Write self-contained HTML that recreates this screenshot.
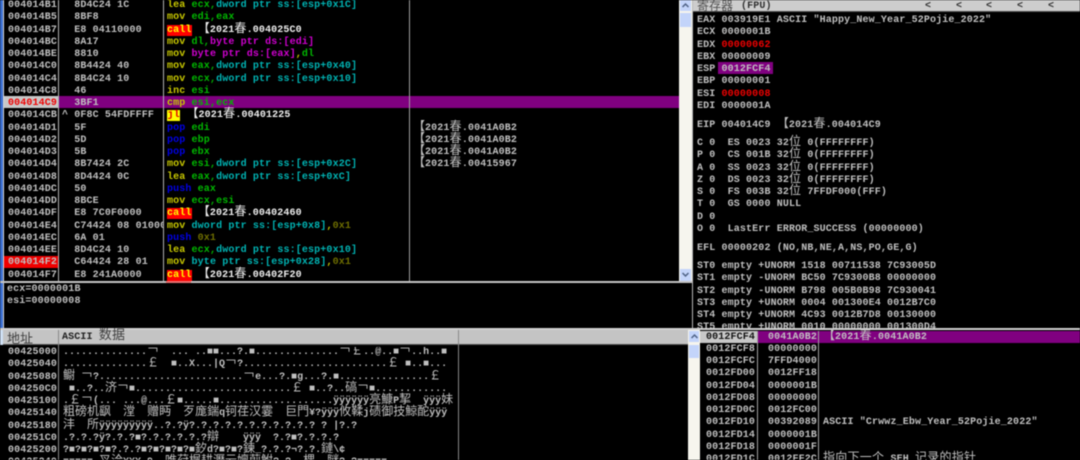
<!DOCTYPE html>
<html lang="zh-CN"><head><meta charset="utf-8"><title>OllyDbg</title>
<style>
html,body{margin:0;padding:0;background:#000;width:1080px;height:460px;overflow:hidden}
#r{position:relative;width:1080px;height:460px;overflow:hidden;background:#000;filter:blur(.4px)}
.a{position:absolute}
.t{position:absolute;white-space:pre;font:bold 10px/12.25px "Liberation Mono","Noto Sans CJK SC",monospace;letter-spacing:.13px;color:#c0c0c0}
.c{font:normal 12px/0 "Noto Sans CJK SC","WenQuanYi Zen Hei",sans-serif;letter-spacing:.26px}
.z{letter-spacing:0}
.b{font:normal 12px/0 "Noto Sans CJK SC",sans-serif;margin-left:-6px;letter-spacing:0}
.m{color:#c8c800}.g{color:#00b800}.y{color:#00b4b4}.p{color:#d000d0}.u{color:#0000e6}.d{color:#6e6e00}.w{color:#f0f0f0}
.call{background:#f00;color:#ff0}.jl{background:#ff0;color:#e00000;padding:0 .5px}
.sb{background:#f6f5ee}.btn{background:#c3d4fa}
.chev{position:absolute;left:3px;width:7px;height:7px}
</style></head><body><div id="r">

<!-- left strip -->
<div class="a" style="left:0;top:0;width:3px;height:330px;background:#3a6ed0"></div>
<div class="a" style="left:3px;top:0;width:1px;height:330px;background:#d8d8d8"></div>

<!-- disasm row highlights -->
<div class="a" style="left:4px;top:96px;width:54px;height:12px;background:#c8c8c8"></div>
<div class="a" style="left:59px;top:96px;width:620px;height:12px;background:#800080"></div>
<div class="a" style="left:4px;top:256px;width:54px;height:12px;background:#f00000"></div>
<!-- separators -->
<div class="a" style="left:58px;top:0;width:1px;height:281px;background:#b0b0b0"></div>
<div class="a" style="left:163px;top:0;width:1px;height:281px;background:#b0b0b0"></div>
<div class="a" style="left:409px;top:0;width:1px;height:281px;background:#a0a0a0"></div>

<div class="t" style="left:8px;top:0px">004014B1
004014B5
004014B7
004014BC
004014BE
004014C0
004014C4
004014C8
<span style="color:#f00000">004014C9</span>
004014CB
004014D1
004014D2
004014D3
004014D4
004014D8
004014DC
004014DD
004014DF
004014E4
004014EC
004014EE
004014F2
004014F7</div>

<div class="t" style="left:62px;top:0px;width:101px;height:281px;overflow:hidden">  8D4C24 1C
  8BF8
  E8 04110000
  8A17
  8810
  8B4424 40
  8B4C24 10
  46
  3BF1
^ 0F8C 54FDFFFF
  5F
  5D
  5B
  8B7424 2C
  8D4424 0C
  50
  8BCE
  E8 7C0F0000
  C74424 08 01000000
  6A 01
  8D4C24 10
  C64424 28 01
  E8 241A0000</div>

<div class="t" style="left:167px;top:0px"><span class="m">lea</span> <span class="g">ecx,</span><span class="y">dword ptr ss:[esp+0x1C]</span>
<span class="m">mov</span> <span class="g">edi,eax</span>
<span class="call">call</span>  <span class="w"><span class="b">【</span>2021<span class="c">春</span>.004025C0</span>
<span class="m">mov</span> <span class="g">dl,</span><span class="p">byte ptr ds:[edi]</span>
<span class="m">mov</span> <span class="p">byte ptr ds:[eax]</span><span class="m">,</span><span class="g">dl</span>
<span class="m">mov</span> <span class="g">eax,</span><span class="y">dword ptr ss:[esp+0x40]</span>
<span class="m">mov</span> <span class="g">ecx,</span><span class="y">dword ptr ss:[esp+0x10]</span>
<span class="m">inc</span> <span class="g">esi</span>
<span class="m">cmp</span> <span class="g">esi,ecx</span>
<span class="jl">jl</span>  <span class="w"><span class="b">【</span>2021<span class="c">春</span>.00401225</span>
<span class="u">pop</span> <span class="g">edi</span>
<span class="u">pop</span> <span class="g">ebp</span>
<span class="u">pop</span> <span class="g">ebx</span>
<span class="m">mov</span> <span class="g">esi,</span><span class="y">dword ptr ss:[esp+0x2C]</span>
<span class="m">lea</span> <span class="g">eax,</span><span class="y">dword ptr ss:[esp+0xC]</span>
<span class="u">push</span> <span class="g">eax</span>
<span class="m">mov</span> <span class="g">ecx,esi</span>
<span class="call">call</span>  <span class="w"><span class="b">【</span>2021<span class="c">春</span>.00402460</span>
<span class="m">mov</span> <span class="y">dword ptr ss:[esp+0x8]</span><span class="m">,</span><span class="d">0x1</span>
<span class="u">push</span> <span class="d">0x1</span>
<span class="m">lea</span> <span class="g">ecx,</span><span class="y">dword ptr ss:[esp+0x10]</span>
<span class="m">mov</span> <span class="y">byte ptr ss:[esp+0x28]</span><span class="m">,</span><span class="d">0x1</span>
<span class="call">call</span>  <span class="w"><span class="b">【</span>2021<span class="c">春</span>.00402F20</span></div>

<div class="t" style="left:419px;top:122.5px"><span class="b">【</span>2021<span class="c">春</span>.0041A0B2
<span class="b">【</span>2021<span class="c">春</span>.0041A0B2
<span class="b">【</span>2021<span class="c">春</span>.0041A0B2
<span class="b">【</span>2021<span class="c">春</span>.00415967</div>

<!-- disasm scrollbar -->
<div class="a sb" style="left:679px;top:0;width:13px;height:281px"></div>
<div class="a btn" style="left:680px;top:0;width:11px;height:11px"><svg class="chev" style="left:2px;top:2px" viewBox="0 0 7 7"><path d="M.5 5L3.5 2L6.5 5" fill="none" stroke="#4d6185" stroke-width="1.5"/></svg></div>
<div class="a btn" style="left:680px;top:13px;width:11px;height:14px"></div>
<div class="a btn" style="left:680px;top:269px;width:11px;height:12px"><svg class="chev" style="left:2px;top:2px" viewBox="0 0 7 7"><path d="M.5 2L3.5 5L6.5 2" fill="none" stroke="#4d6185" stroke-width="1.5"/></svg></div>

<!-- horizontal splitter disasm / info -->
<div class="a" style="left:0;top:281px;width:693px;height:2px;background:#c4c4c4"></div>
<div class="a" style="left:166px;top:281px;width:25px;height:2px;background:#e87070"></div>

<!-- info pane -->
<div class="t" style="left:7px;top:284px">ecx=0000001B
esi=00000008</div>

<!-- vertical splitter -->
<div class="a" style="left:692px;top:0;width:1px;height:330px;background:#b8b8b8"></div>

<!-- registers -->
<div class="a" style="left:693px;top:0;width:387px;height:11px;background:#cdcdcd"></div>
<div class="a" style="left:693px;top:11px;width:387px;height:1px;background:#505050"></div>
<div class="a" style="left:697px;top:-1px;font:12px/14px 'Noto Sans CJK SC',sans-serif;color:#505050;white-space:pre">寄存器</div>
<div class="t" style="left:741px;top:1px;color:#303030">(FPU)</div>
<div class="t" style="left:925px;top:1px;color:#303030">&lt;</div>
<div class="t" style="left:956px;top:1px;color:#303030">&lt;</div>
<div class="t" style="left:986px;top:1px;color:#303030">&lt;</div>
<div class="t" style="left:1017px;top:1px;color:#303030">&lt;</div>
<div class="t" style="left:1048px;top:1px;color:#303030">&lt;</div>

<div class="a" style="left:718px;top:62px;width:55px;height:12px;background:#800080"></div>
<div class="t" style="left:697px;top:15px">EAX 003919E1 ASCII "Happy_New_Year_52Pojie_2022"
ECX 0000001B
EDX <span style="color:#f00000">00000062</span>
EBX 00000009
ESP 0012FCF4
EBP 00000001
ESI <span style="color:#f00000">00000008</span>
EDI 0000001A</div>
<div class="t" style="left:697px;top:120px">EIP 004014C9  <span class="b">【</span>2021<span class="c">春</span>.004014C9</div>
<div class="t" style="left:697px;top:138px">C 0  ES 0023 32<span class="c">位</span> 0(FFFFFFFF)
P 0  CS 001B 32<span class="c">位</span> 0(FFFFFFFF)
A 0  SS 0023 32<span class="c">位</span> 0(FFFFFFFF)
Z 0  DS 0023 32<span class="c">位</span> 0(FFFFFFFF)
S 0  FS 003B 32<span class="c">位</span> 7FFDF000(FFF)
T 0  GS 0000 NULL
D 0
O 0  LastErr ERROR_SUCCESS (00000000)</div>
<div class="t" style="left:697px;top:243px">EFL 00000202 (NO,NB,NE,A,NS,PO,GE,G)</div>
<div class="t" style="left:697px;top:261px;height:67px;overflow:hidden">ST0 empty +UNORM 1518 00711538 7C93005D
ST1 empty -UNORM BC50 7C9300B8 00000000
ST2 empty -UNORM B798 005B0B98 7C930041
ST3 empty +UNORM 0004 001300E4 0012B7C0
ST4 empty +UNORM 4C93 0012B7D8 00130000
ST5 empty +UNORM 0010 00000000 001300D4</div>

<!-- splitter dump/stack -->
<div class="a" style="left:0;top:328px;width:1080px;height:2px;background:#d0d0d0"></div>

<!-- dump header -->
<div class="a" style="left:0;top:330px;width:688px;height:14px;background:#c4c4c4"></div>
<div class="a" style="left:0;top:344px;width:688px;height:1px;background:#505050"></div>
<div class="a" style="left:0;top:330px;width:3px;height:15px;background:#cfe0f4"></div>
<div class="a" style="left:58px;top:330px;width:1px;height:130px;background:#888"></div>
<div class="a" style="left:458px;top:330px;width:1px;height:130px;background:#888"></div>
<div class="a" style="left:7px;top:330px;font:13px/16px 'Noto Sans CJK SC',sans-serif;color:#404040;white-space:pre">地址</div>
<div class="t" style="left:62px;top:332px;color:#202020">ASCII <span class="c" style="font-size:13px;color:#404040">数据</span></div>

<!-- dump -->
<div class="t" style="left:8px;top:347px">00425000
00425040
00425080
004250C0
00425100
00425140
00425180
004251C0
00425200
00425240</div>
<div class="t z" style="left:63px;top:347px;width:395px;overflow:hidden">..............<span class="c z">￢</span>  ... ..■■...?.■..............<span class="c z">￢￡</span>..@..■<span class="c z">￢</span>..h..■
..............<span class="c z">￡</span>  ■..X...|Q<span class="c z">￢</span>?........................<span class="c z">￡</span> ■..■...
<span class="c z">鳚</span> <span class="c z">￢</span>?........................<span class="c z">￢</span>e...?.■g...?.■...............<span class="c z">￡</span>
 ■..?..<span class="c z">济</span><span class="c z">￢</span>■..........................<span class="c z">￡</span> ■..?..<span class="c z">碻</span><span class="c z">￢</span>■............
.<span class="c z">￡￢</span>(... ...@...<span class="c z">￡</span>■.....■...................ÿÿÿÿÿÿ<span class="c z">亮鱇</span>P<span class="c z">挈</span>  ÿÿÿ<span class="c z">妹</span>
<span class="c z">粗磅机飖</span>  <span class="c z">漟</span>  <span class="c z">赠眄</span>  <span class="c z">歹庬鍴</span>q<span class="c z">钶荏汉霎</span>  <span class="c z">巨門</span>¥?ÿÿÿ<span class="c z">攸鞣</span>j<span class="c z">碛御技鯨酡</span>ÿÿÿ
<span class="c z">沣</span>  <span class="c z">所</span>ÿÿÿÿÿÿÿÿÿ..?.?ÿ?.?.?.?.?.?.?.?.?.?.? ? |?.?
.?.?.?ÿ?.?.?■?.?.?.?.?.?<span class="c z">辯</span>    ÿÿÿ  ?.?■?.?.?.?
?■?■?■?■?.?.?■?■?■?■?■<span class="c z">釸</span>d?■?■?<span class="c z">鍊</span>_?.?.?¬?.?.<span class="c z">鏈</span>\¢
■■■■■ <span class="c z">叉洽</span>¥¥¥ 9 .<span class="c z">唯荮榍耕瀝云嬗萴鮒</span>? ? .<span class="c z">棵</span> .<span class="c z">瞇</span>? ?■■■■■</div>

<!-- stack scrollbar -->
<div class="a sb" style="left:688px;top:330px;width:12px;height:130px"></div>
<div class="a btn" style="left:689px;top:331px;width:10px;height:11px"><svg class="chev" style="left:1.5px;top:2px" viewBox="0 0 7 7"><path d="M.5 5L3.5 2L6.5 5" fill="none" stroke="#4d6185" stroke-width="1.5"/></svg></div>
<div class="a btn" style="left:689px;top:345px;width:10px;height:13px"></div>

<!-- stack -->
<div class="a" style="left:700px;top:331px;width:57px;height:12px;background:#c8c8c8"></div>
<div class="a" style="left:757px;top:331px;width:323px;height:12px;background:#800080"></div>
<div class="a" style="left:757px;top:331px;width:1px;height:129px;background:#a0a0a0"></div>
<div class="a" style="left:818px;top:331px;width:1px;height:129px;background:#a0a0a0"></div>
<div class="t" style="left:706px;top:331.5px"><span style="color:#111">0012FCF4</span>
0012FCF8
0012FCFC
0012FD00
0012FD04
0012FD08
0012FD0C
0012FD10
0012FD14
0012FD18
0012FD1C</div>
<div class="t" style="left:768px;top:331.5px">0041A0B2
00000000
7FFD4000
0012FF18
0000001B
00000000
0012FC00
00392089
0000001B
0000001F
0012FF2C</div>
<div class="t" style="left:829px;top:331.5px"><span class="b">【</span>2021<span class="c">春</span>.0041A0B2</div>
<div class="t" style="left:823px;top:417px">ASCII "Crwwz_Ebw_Year_52Pojie_2022"</div>
<div class="t" style="left:823px;top:454px"><span class="c">指向下一个</span> SEH <span class="c">记录的指针</span></div>

</div></body></html>
